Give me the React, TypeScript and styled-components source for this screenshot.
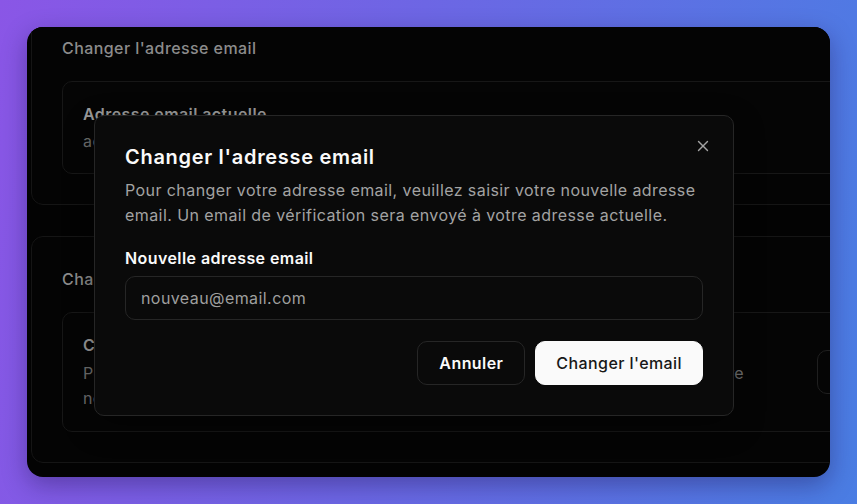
import { useLayoutEffect, useRef } from 'react';

import { X } from 'lucide-react';
import styled, { createGlobalStyle } from 'styled-components';

const GlobalStyle = createGlobalStyle`
  html,
  body,
  #root {
    margin: 0;
    height: 100%;
  }

  body {
    font-family: Inter, 'Noto Sans', 'Liberation Sans', sans-serif;
    letter-spacing: 0.42px;
    background: linear-gradient(100deg, #8a56e6 0%, #6d66e4 45%, #4a7de3 100%);
    -webkit-font-smoothing: antialiased;
  }

  * {
    box-sizing: border-box;
  }
`;

const Stage = styled.div`
  position: relative;
  height: 100%;
  padding: 27px;
`;

const Window = styled.div`
  width: 803px;
  height: 450px;
  padding: 4px 4px 40px;
  border-radius: 16px;
  background: #030303;
  overflow: hidden;
  box-shadow: 0 8px 24px rgba(20, 10, 60, 0.35);
`;

const Section = styled.section<{ $last?: boolean }>`
  width: 948px;
  padding: 30px;
  margin-bottom: ${({ $last }) => ($last ? 0 : 31)}px;
  border: 1px solid #151515;
  border-radius: 12px;
  background: #040404;
`;

const SectionTitle = styled.h3`
  margin: 0 0 21px;
  font-size: 16px;
  font-weight: 500;
  line-height: 24px;
  color: #8c8c8c;
`;

const Card = styled.div`
  display: flex;
  align-items: center;
  gap: 24px;
  padding: 20px;
  border: 1px solid #171717;
  border-radius: 10px;
  background: #050505;
`;

const CardBody = styled.div`
  flex: 1;
  min-width: 0;
`;

const CardTitle = styled.div<{ $gap: number }>`
  margin-bottom: ${({ $gap }) => $gap}px;
  font-size: 16px;
  font-weight: 600;
  line-height: 24px;
  color: #9a9a9a;
`;

const CardText = styled.p<{ $lineHeight: number }>`
  margin: 0;
  max-width: 680px;
  font-size: 16px;
  line-height: ${({ $lineHeight }) => $lineHeight}px;
  color: #707070;
`;

const CardButton = styled.button`
  flex-shrink: 0;
  height: 44px;
  padding: 0 20px;
  border: 1px solid #1f1f1f;
  border-radius: 10px;
  background: transparent;
  font-family: inherit;
  font-size: 16px;
  font-weight: 600;
  letter-spacing: inherit;
  color: #9a9a9a;
`;

const Dialog = styled.div`
  position: absolute;
  left: 94px;
  top: 115px;
  width: 640px;
  padding: 29px 30px 30px;
  border: 1px solid #262626;
  border-radius: 10px;
  background: #0a0a0a;
  box-shadow: 0 10px 30px rgba(0, 0, 0, 0.4);
`;

const CloseButton = styled.button`
  position: absolute;
  top: 21px;
  right: 21px;
  display: flex;
  padding: 0;
  border: 0;
  background: none;
  color: #a3a3a3;
`;

const DialogTitle = styled.h2`
  margin: 0 0 9px;
  font-size: 20px;
  font-weight: 600;
  line-height: 24px;
  letter-spacing: 0.7px;
  color: #fafafa;
`;

const DialogText = styled.p`
  margin: 0;
  font-size: 16px;
  line-height: 25px;
  color: #a3a3a3;
`;

const Label = styled.label`
  display: block;
  margin-top: 18px;
  font-size: 16px;
  font-weight: 600;
  line-height: 24px;
  color: #fafafa;
`;

const Input = styled.input`
  display: block;
  width: 100%;
  height: 44px;
  margin-top: 6px;
  padding: 0 15px;
  border: 1px solid #262626;
  border-radius: 10px;
  background: #0a0a0a;
  font-family: inherit;
  font-size: 16px;
  letter-spacing: inherit;
  color: #fafafa;
  outline: none;

  &::placeholder {
    color: #9f9f9f;
  }
`;

const Actions = styled.div`
  display: flex;
  justify-content: flex-end;
  gap: 10px;
  margin-top: 21px;
`;

const Button = styled.button<{ $primary?: boolean }>`
  height: 44px;
  padding: 0 ${({ $primary }) => ($primary ? 20 : 21)}px;
  border: 1px solid ${({ $primary }) => ($primary ? '#fafafa' : '#262626')};
  border-radius: 10px;
  background: ${({ $primary }) => ($primary ? '#fafafa' : '#0a0a0a')};
  font-family: inherit;
  font-size: 16px;
  font-weight: ${({ $primary }) => ($primary ? 500 : 600)};
  letter-spacing: inherit;
  color: ${({ $primary }) => ($primary ? '#171717' : '#fafafa')};
`;

function App() {
  const windowRef = useRef<HTMLDivElement>(null);

  useLayoutEffect(() => {
    if (windowRef.current) windowRef.current.scrollTop = 26;
  }, []);

  return (
    <>
      <GlobalStyle />
      <Stage>
        <Window ref={windowRef}>
          <Section>
            <SectionTitle>Changer l'adresse email</SectionTitle>
            <Card>
              <CardBody>
                <CardTitle $gap={3}>Adresse email actuelle</CardTitle>
                <CardText $lineHeight={24}>admin@exemple.com</CardText>
              </CardBody>
            </Card>
          </Section>
          <Section $last>
            <SectionTitle>Changer le mot de passe</SectionTitle>
            <Card>
              <CardBody>
                <CardTitle $gap={4}>Changer votre mot de passe</CardTitle>
                <CardText $lineHeight={25}>
                  Pour des raisons de sécurité, évitez un mot de passe trop court ou proche de votre
                  nom, de votre adresse email ou de votre date de naissance.
                </CardText>
              </CardBody>
              <CardButton>Modifier</CardButton>
            </Card>
          </Section>
        </Window>

        <Dialog role='dialog'>
          <CloseButton aria-label='Fermer'>
            <X size={18} strokeWidth={1.8} />
          </CloseButton>
          <DialogTitle>Changer l'adresse email</DialogTitle>
          <DialogText>
            Pour changer votre adresse email, veuillez saisir votre nouvelle adresse email. Un email
            de vérification sera envoyé à votre adresse actuelle.
          </DialogText>
          <Label htmlFor='new-email'>Nouvelle adresse email</Label>
          <Input id='new-email' type='email' placeholder='nouveau@email.com' />
          <Actions>
            <Button>Annuler</Button>
            <Button $primary>Changer l'email</Button>
          </Actions>
        </Dialog>
      </Stage>
    </>
  );
}

export default App;
